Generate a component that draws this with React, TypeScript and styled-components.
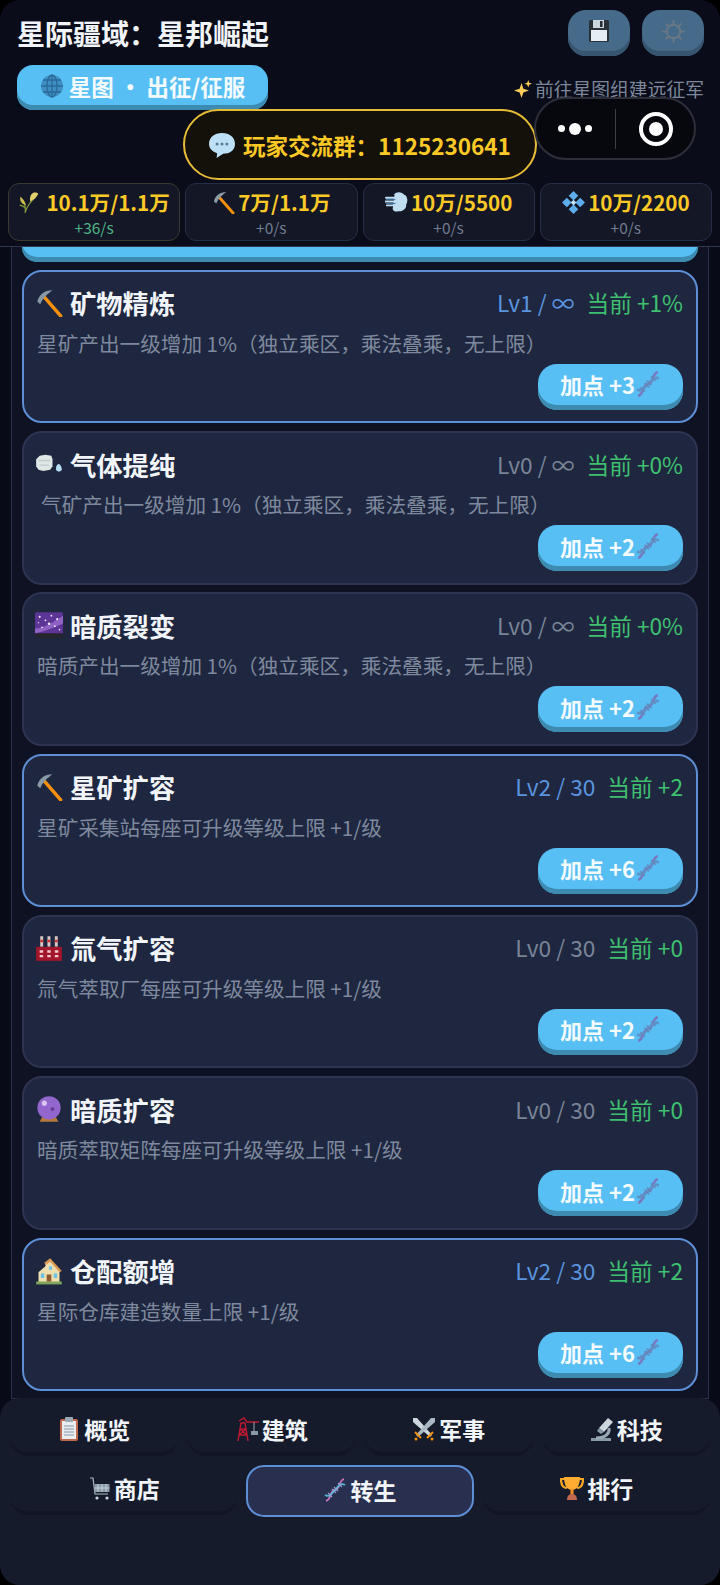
import React from 'react';
import styled, { createGlobalStyle } from 'styled-components';

const GlobalStyle = createGlobalStyle`
  html, body { margin: 0; padding: 0; background: #000; }
  * { box-sizing: border-box; }
  body { font-family: "Noto Sans CJK SC", "Noto Sans", sans-serif; }
`;

type IconName =
  | 'pick' | 'gas' | 'galaxy' | 'factory' | 'ball' | 'house' | 'dna' | 'dnaBright' | 'save' | 'gear' | 'globe'
  | 'spark' | 'chat' | 'wheat' | 'wind' | 'gem' | 'clip' | 'crane' | 'swords' | 'scope' | 'cart' | 'trophy';

const shapes: Record<IconName, React.ReactNode> = {
  pick: (
    <>
      <path d="M8 7 L22 23" stroke="#f4900c" strokeWidth="3" strokeLinecap="round" />
      <path d="M2 11 C3 5 8 1 15 1 C11 4 7 7 4.5 13 Z" fill="#8899a6" />
    </>
  ),
  gas: (
    <>
      <path d="M1 8 L4 5 L9 4 L14 5 L15 8 L15 14 L13 17 L7 18 L3 17 L1 14 Z" fill="#dfe6e6" />
      <path d="M3 9 H13 M4 13 H12" stroke="#c2cbcc" strokeWidth="1.2" />
      <path d="M20 12 C22 12 23 15 23 17 C22 19 19 19 18 17 C18 15 18 13 20 12 Z" fill="#b5dcf0" />
    </>
  ),
  galaxy: (
    <>
      <rect x="0" y="1" width="24" height="19" rx="1.5" fill="#5d3596" />
      <rect x="0" y="19" width="24" height="4" rx="1" fill="#26242c" />
      <path d="M0 15 C8 15 16 9 24 4 L24 11 C16 14 8 18 0 19 Z" fill="#8f62c4" />
      <g fill="#f1e6ff">
        <circle cx="4" cy="5" r=".9" /><circle cx="9" cy="8" r=".8" /><circle cx="14" cy="4" r=".8" />
        <circle cx="19" cy="7" r=".9" /><circle cx="12" cy="11" r="1.1" /><circle cx="6" cy="14" r=".8" />
        <circle cx="17" cy="13" r=".8" /><circle cx="21" cy="16" r=".7" /><circle cx="3" cy="10" r=".6" />
      </g>
    </>
  ),
  factory: (
    <>
      <path d="M4.5 2h2.5v9H4.5zM10.7 2h2.5v9h-2.5zM17 2h2.5v9H17z" fill="#d8c7c7" />
      <path d="M4.5 5h2.5v2H4.5zM10.7 5h2.5v2h-2.5zM17 5h2.5v2H17z" fill="#c33" />
      <rect x="1" y="11" width="22" height="12" fill="#a3152a" />
      <path d="M4 14h3v2H4zM10.5 14h3v2h-3zM17 14h3v2h-3zM4 18h3v2H4zM10.5 18h3v2h-3zM17 18h3v2h-3z" fill="#f1c9cf" />
    </>
  ),
  ball: (
    <>
      <path d="M6 19h12l2 4H4z" fill="#b6793c" />
      <circle cx="12" cy="11" r="10" fill="#9266cc" />
      <circle cx="8" cy="7" r="2.2" fill="#d9c5ef" /><circle cx="15" cy="12" r="1.6" fill="#5c3a8e" />
    </>
  ),
  house: (
    <>
      <path d="M3 23 V13 L9 8 V5 L13 2 L21 12 V23 Z" fill="#f0dfae" />
      <path d="M13 1 L8 5 L9 7 L13 4 L21 13 L23 12 Z" fill="#d99a55" />
      <rect x="1" y="21" width="22" height="2.5" fill="#7fa65a" />
      <rect x="10" y="15" width="4" height="6" fill="#8a5a2e" />
      <rect x="5" y="14" width="3" height="4" fill="#6cc3e8" /><rect x="16" y="14" width="3" height="4" fill="#6cc3e8" />
      <rect x="12" y="8" width="2.6" height="3" fill="#6cc3e8" />
    </>
  ),
  dna: (
    <g fill="none" opacity="0.85">
      <path d="M3 23 C9 21 6 13 12 12 C18 11 15 3 21 1" stroke="#7d6cb8" strokeWidth="2.4" />
      <path d="M2 17 C7 20 9 15 12 12 C15 9 17 4 22 7" stroke="#5f8cc0" strokeWidth="2.4" />
      <path d="M5 15l4 4M9 11l4 4M11 9l4 4M15 5l4 4" stroke="#6a7cb0" strokeWidth="1.6" />
    </g>
  ),
  dnaBright: (
    <g fill="none">
      <path d="M3 23 C9 21 6 13 12 12 C18 11 15 3 21 1" stroke="#d070c0" strokeWidth="1.8" />
      <path d="M2 17 C7 20 9 15 12 12 C15 9 17 4 22 7" stroke="#55b8d8" strokeWidth="1.8" />
      <path d="M5 15l4 4M9 11l4 4M11 9l4 4M15 5l4 4" stroke="#9a9fd0" strokeWidth="1.1" />
    </g>
  ),
  save: (
    <>
      <rect x="2" y="1" width="20" height="22" rx="1.5" fill="#2a3238" />
      <rect x="6" y="1" width="11" height="8" fill="#ccd6dd" />
      <rect x="13" y="2" width="2.6" height="6" fill="#2a3238" />
      <rect x="4" y="11" width="16" height="11" fill="#e6eef4" />
    </>
  ),
  gear: (
    <g fill="none" stroke="#677785" strokeWidth="2">
      <circle cx="12" cy="12" r="6.5" />
      <path d="M12 2v3.5M12 18.5V22M2 12h3.5M18.5 12H22M5 5l2.5 2.5M16.5 16.5L19 19M19 5l-2.5 2.5M7.500 16.500L5 19" strokeLinecap="round" />
    </g>
  ),
  globe: (
    <>
      <circle cx="12" cy="12" r="11" fill="#3f8fc4" />
      <g fill="none" stroke="#2a6a99" strokeWidth="1.3">
        <ellipse cx="12" cy="12" rx="5" ry="11" />
        <path d="M12 1v22M1 12h22M3 6h18M3 18h18" />
      </g>
    </>
  ),
  spark: (
    <g fill="#fdcb58">
      <path d="M10 4 L12.500 11.500 L20 14 L12.500 16.500 L10 24 L7.500 16.500 L0 14 L7.500 11.500 Z" />
      <path d="M19 0 L20.300 3.700 L24 5 L20.300 6.300 L19 10 L17.700 6.300 L14 5 L17.700 3.700 Z" />
    </g>
  ),
  chat: (
    <>
      <path d="M12 1 C19 1 24 5 24 11 C24 17 19 20 13 20 L7 24 L7.500 19.500 C3 18 0 15 0 11 C0 5 5 1 12 1 Z" fill="#bde0f6" />
      <circle cx="7.500" cy="11" r="1.4" fill="#5a7a99" /><circle cx="12" cy="11" r="1.4" fill="#5a7a99" /><circle cx="16.500" cy="11" r="1.4" fill="#5a7a99" />
    </>
  ),
  wheat: (
    <>
      <path d="M8 24 C9 18 8 12 4 8 M8 24 C10 17 14 11 20 6 M9 20 C8 17 6 16 2 15" stroke="#7f9a3a" strokeWidth="1.3" fill="none" />
      <path d="M17 1 C20 0 23 1 23 2 C22 6 18 8 14 11 C13 7 14 3 17 1 Z" fill="#e0cf6a" />
      <path d="M3 5 C4 7 8 9 9 15 C5 14 1 10 3 5 Z" fill="#cdbb50" />
    </>
  ),
  wind: (
    <>
      <path d="M9 4 C12 0 18 1 20 4 C24 5 24 12 22 14 C23 18 18 22 14 21 C11 22 9 21 8 19 L10 4 Z" fill="#c0ddf2" />
      <path d="M1 7h11M0 11h12M2 15h10" stroke="#c0ddf2" strokeWidth="2" strokeLinecap="round" />
      <path d="M1 9h10M1 13h10" stroke="#3f7fb5" strokeWidth="1" />
    </>
  ),
  gem: (
    <>
      <g fill="#5dadec">
        <path d="M12 0 L17 5 L12 10 L7 5 Z" />
        <path d="M5 7 L10 12 L5 17 L0 12 Z" />
        <path d="M19 7 L24 12 L19 17 L14 12 Z" />
        <path d="M12 14 L17 19 L12 24 L7 19 Z" />
      </g>
      <path d="M12 9 L15 12 L12 15 L9 12 Z" fill="#bde0f6" />
    </>
  ),
  clip: (
    <>
      <rect x="3" y="2" width="18" height="22" rx="2" fill="#c1694f" />
      <rect x="5" y="4" width="14" height="18" fill="#e8edf0" />
      <rect x="8" y="0" width="8" height="5" rx="1" fill="#99aab5" />
      <path d="M7 9h10M7 12h10M7 15h10M7 18h10" stroke="#8899a6" strokeWidth="1.2" />
    </>
  ),
  crane: (
    <>
      <path d="M3 24 L6 6 H10 L13 24 M4 18 H12 M5 12 H11 M5 12 L12 18 M11 12 L4 18" stroke="#be1931" strokeWidth="1.4" fill="none" />
      <path d="M4 4 L9 1 L12 5 H24" stroke="#be1931" strokeWidth="1.4" fill="none" />
      <path d="M19 5v9" stroke="#99aab5" strokeWidth="1" />
      <rect x="16" y="14" width="7" height="4" fill="#8899a6" />
    </>
  ),
  swords: (
    <>
      <path d="M1 1 L5 1 L20 18 L18 20 L1 5 Z" fill="#ccd6dd" />
      <path d="M23 1 L19 1 L4 18 L6 20 L23 5 Z" fill="#a9b8c2" />
      <path d="M3 15 L9 21 M21 15 L15 21" stroke="#f4900c" strokeWidth="2" />
      <circle cx="4" cy="22" r="1.5" fill="#f4900c" /><circle cx="20" cy="22" r="1.5" fill="#f4900c" />
    </>
  ),
  scope: (
    <>
      <rect x="1" y="21" width="20" height="3" fill="#8899a6" />
      <path d="M6 21 C16 21 20 16 19 11" stroke="#99aab5" strokeWidth="3" fill="none" />
      <path d="M18 1 L23 5 L14 15 L9 11 Z" fill="#ccd6dd" />
      <path d="M9 11 L14 15 L11 17 L7 14 Z" fill="#8899a6" />
    </>
  ),
  cart: (
    <>
      <path d="M3 2 H6 L8 18 H21" stroke="#aab8c2" strokeWidth="1.2" fill="none" />
      <rect x="7.500" y="8" width="15" height="8" fill="#8899a6" />
      <path d="M11 8v8M15 8v8M19 8v8M7.500 12h15" stroke="#ccd6dd" strokeWidth="0.9" />
      <circle cx="10" cy="22" r="1.6" fill="#ccd6dd" /><circle cx="20" cy="22" r="1.6" fill="#ccd6dd" />
    </>
  ),
  trophy: (
    <>
      <path d="M5 3 H1 C1 9 3 12 7 12 M19 3 H23 C23 9 21 12 17 12" stroke="#f9a825" strokeWidth="2.2" fill="none" />
      <path d="M4 1 H20 C20 9 17 14 12 14 C7 14 4 9 4 1 Z" fill="#ffac33" />
      <rect x="10.500" y="13" width="3" height="6" fill="#f19020" />
      <path d="M7 24 C7 20 9 18 12 18 C15 18 17 20 17 24 Z" fill="#c1694f" />
    </>
  ),
};

const Icon = ({ name, size = 24 }: { name: IconName; size?: number }) => (
  <svg viewBox="0 0 24 24" width={size} height={size} style={{ flex: 'none' }}>
    {shapes[name]}
  </svg>
);

interface Talent {
  icon: IconName;
  name: string;
  level: string;
  current: string;
  desc: string;
  cost: string;
  active?: boolean;
  indent?: boolean;
}

const talents: Talent[] = [
  { icon: 'pick', name: '矿物精炼', level: 'Lv1 / ∞', current: '当前 +1%', desc: '星矿产出一级增加 1%（独立乘区，乘法叠乘，无上限）', cost: '加点 +3', active: true },
  { icon: 'gas', name: '气体提纯', level: 'Lv0 / ∞', current: '当前 +0%', desc: '气矿产出一级增加 1%（独立乘区，乘法叠乘，无上限）', cost: '加点 +2', indent: true },
  { icon: 'galaxy', name: '暗质裂变', level: 'Lv0 / ∞', current: '当前 +0%', desc: '暗质产出一级增加 1%（独立乘区，乘法叠乘，无上限）', cost: '加点 +2' },
  { icon: 'pick', name: '星矿扩容', level: 'Lv2 / 30', current: '当前 +2', desc: '星矿采集站每座可升级等级上限 +1/级', cost: '加点 +6', active: true },
  { icon: 'factory', name: '氚气扩容', level: 'Lv0 / 30', current: '当前 +0', desc: '氚气萃取厂每座可升级等级上限 +1/级', cost: '加点 +2' },
  { icon: 'ball', name: '暗质扩容', level: 'Lv0 / 30', current: '当前 +0', desc: '暗质萃取矩阵每座可升级等级上限 +1/级', cost: '加点 +2' },
  { icon: 'house', name: '仓配额增', level: 'Lv2 / 30', current: '当前 +2', desc: '星际仓库建造数量上限 +1/级', cost: '加点 +6', active: true },
];

const resources: { icon: IconName; value: string; rate: string; hot?: boolean }[] = [
  { icon: 'wheat', value: '10.1万/1.1万', rate: '+36/s', hot: true },
  { icon: 'pick', value: '7万/1.1万', rate: '+0/s' },
  { icon: 'wind', value: '10万/5500', rate: '+0/s' },
  { icon: 'gem', value: '10万/2200', rate: '+0/s' },
];

const topTabs: { icon: IconName; label: string }[] = [
  { icon: 'clip', label: '概览' },
  { icon: 'crane', label: '建筑' },
  { icon: 'swords', label: '军事' },
  { icon: 'scope', label: '科技' },
];

const bottomTabs: { icon: IconName; label: string; active?: boolean }[] = [
  { icon: 'cart', label: '商店' },
  { icon: 'dnaBright', label: '转生', active: true },
  { icon: 'trophy', label: '排行' },
];

export default function App() {
  return (
    <Page>
      <GlobalStyle />
      <Header>
        <TitleRow>
          <Title>星际疆域：星邦崛起</Title>
          <ToolGroup>
            <ToolButton><Icon name="save" size={24} /></ToolButton>
            <ToolButton><Icon name="gear" size={25} /></ToolButton>
          </ToolGroup>
        </TitleRow>
        <MapRow>
          <MapButton><Icon name="globe" size={24} />星图 · 出征/征服</MapButton>
          <Hint><Icon name="spark" size={18} />前往星图组建远征军</Hint>
        </MapRow>
        <GroupChip><Icon name="chat" size={26} />玩家交流群：1125230641</GroupChip>
        <Capsule>
          <Dots><Dot /><Dot $big /><Dot /></Dots>
          <CapsuleLine />
          <Target><TargetCore /></Target>
        </Capsule>
        <ResourceRow>
          {resources.map((r) => (
            <ResourceCard key={r.value} $hot={r.hot}>
              <ResourceValue $hot={r.hot}><Icon name={r.icon} size={r.hot ? 21 : 23} />{r.value}</ResourceValue>
              <ResourceRate $hot={r.hot}>{r.rate}</ResourceRate>
            </ResourceCard>
          ))}
        </ResourceRow>
      </Header>
      <Main>
        <Panel>
          <ClippedBar />
          {talents.map((t) => (
            <Card key={t.name} $active={t.active}>
              <CardHead>
                <CardTitle><Icon name={t.icon} size={28} />{t.name}</CardTitle>
                <Stats>
                  <Level $active={t.active}>{t.level}</Level>
                  <Current>{t.current}</Current>
                </Stats>
              </CardHead>
              <Desc $indent={t.indent}>{t.desc}</Desc>
              <CardFoot>
                <AddButton>{t.cost}<Icon name="dna" size={26} /></AddButton>
              </CardFoot>
            </Card>
          ))}
        </Panel>
      </Main>
      <Nav>
        <NavRow $cols={4}>
          {topTabs.map((t) => (
            <Tab key={t.label}><Icon name={t.icon} size={24} />{t.label}</Tab>
          ))}
        </NavRow>
        <NavRow $cols={3}>
          {bottomTabs.map((t) => (
            <Tab key={t.label} $active={t.active}><Icon name={t.icon} size={24} />{t.label}</Tab>
          ))}
        </NavRow>
      </Nav>
    </Page>
  );
}

const Page = styled.div`
  position: relative;
  width: 720px;
  height: 1585px;
  display: flex;
  flex-direction: column;
  overflow: hidden;
  border-radius: 20px;
  background: #080b17;
`;

const Header = styled.header`
  position: relative;
  height: 247px;
  flex: none;
  padding: 10px 8px 0;
  background: #0a0d19;
  border-bottom: 1px solid #2f374e;
`;

const TitleRow = styled.div`
  display: flex;
  align-items: center;
  justify-content: space-between;
  height: 46px;
  padding: 0 9px;
`;

const Title = styled.h1`
  margin: 0;
  font-size: 28px;
  font-weight: 700;
  line-height: 46px;
  color: #f1f5f9;
`;

const ToolGroup = styled.div`
  display: flex;
  gap: 12px;
  margin-right: -1px;
`;

const ToolButton = styled.div`
  width: 62px;
  height: 46px;
  display: flex;
  align-items: center;
  justify-content: center;
  border-radius: 18px;
  background: #466a8a;
  box-shadow: inset 0 -5px 0 #385570;
  padding-bottom: 4px;
`;

const MapRow = styled.div`
  display: flex;
  align-items: flex-start;
  justify-content: space-between;
  margin-top: 9px;
  padding: 0 8px 0 9px;
`;

const MapButton = styled.div`
  width: 251px;
  height: 45px;
  display: flex;
  align-items: center;
  justify-content: center;
  gap: 5px;
  border-radius: 16px;
  padding-bottom: 4px;
  background: #58bff4;
  box-shadow: inset 0 -5px 0 #3d8bb0;
  color: #f4fbff;
  font-size: 22.5px;
  font-weight: 700;
  white-space: pre;
`;

const Hint = styled.div`
  display: flex;
  align-items: center;
  gap: 3px;
  margin-top: 11px;
  color: #7c879b;
  font-size: 18.8px;
  line-height: 26px;
`;

const GroupChip = styled.div`
  position: absolute;
  left: 183px;
  top: 109px;
  width: 354px;
  height: 71px;
  display: flex;
  align-items: center;
  justify-content: center;
  gap: 8px;
  border: 2px solid #e6bb35;
  border-radius: 36px;
  background: #14110b;
  color: #fbc926;
  font-size: 22.5px;
  font-weight: 700;
`;

const Capsule = styled.div`
  position: absolute;
  left: 534px;
  top: 97px;
  width: 162px;
  height: 63px;
  display: flex;
  align-items: center;
  border: 2px solid #2c2f3a;
  border-radius: 32px;
  background: #07080d;
`;

const Dots = styled.div`
  width: 79px;
  display: flex;
  align-items: center;
  justify-content: center;
  gap: 4px;
  padding-right: 2px;
`;

const Dot = styled.span<{ $big?: boolean }>`
  width: ${(p) => (p.$big ? 12 : 7)}px;
  height: ${(p) => (p.$big ? 12 : 7)}px;
  border-radius: 50%;
  background: #fff;
`;

const CapsuleLine = styled.span`
  width: 1px;
  height: 40px;
  background: #3b3e49;
`;

const Target = styled.span`
  width: 34px;
  height: 34px;
  margin-left: 23px;
  display: flex;
  align-items: center;
  justify-content: center;
  border: 4px solid #fff;
  border-radius: 50%;
`;

const TargetCore = styled.span`
  width: 14px;
  height: 14px;
  border-radius: 50%;
  background: #fff;
`;

const ResourceRow = styled.div`
  position: absolute;
  left: 8px;
  right: 8px;
  top: 183px;
  display: grid;
  grid-template-columns: repeat(4, 1fr);
  gap: 5px;
`;

const ResourceCard = styled.div<{ $hot?: boolean }>`
  height: 58px;
  display: flex;
  flex-direction: column;
  align-items: center;
  border: 1.5px solid ${(p) => (p.$hot ? '#3a3a32' : '#262e45')};
  border-radius: 11px;
  background: #131726;
`;

const ResourceValue = styled.div<{ $hot?: boolean }>`
  display: flex;
  align-items: center;
  gap: ${(p) => (p.$hot ? 7 : 3)}px;
  margin-top: 4px;
  color: #fbc926;
  font-size: 20.6px;
  font-weight: 700;
  line-height: 29px;
  white-space: nowrap;
`;

const ResourceRate = styled.div<{ $hot?: boolean }>`
  color: ${(p) => (p.$hot ? '#4fb585' : '#717c91')};
  font-size: 15.5px;
  line-height: 20px;
`;

const Main = styled.main`
  flex: 1;
  min-height: 0;
  padding: 0 11px;
  overflow: hidden;
`;

const Panel = styled.div`
  height: 100%;
  padding: 0 10px;
  display: flex;
  flex-direction: column;
  gap: 7.8px;
  border: 1.5px solid #2a3148;
  border-top: 0;
  background: #0e1222;
`;

const ClippedBar = styled.div`
  height: 15px;
  flex: none;
  border-radius: 0 0 18px 18px;
  background: #58bff4;
  box-shadow: inset 0 -5px 0 #3d8bb0;
`;

const Card = styled.article<{ $active?: boolean }>`
  height: 153.5px;
  flex: none;
  padding: 11px 13px 0 13px;
  border: 2px solid ${(p) => (p.$active ? '#5d8fd6' : '#2d3350')};
  border-radius: 20px;
  background: #1e2640;
`;

const CardHead = styled.div`
  display: flex;
  align-items: center;
  justify-content: space-between;
  height: 40px;
`;

const CardTitle = styled.h2`
  margin: 0 0 0 -2px;
  display: flex;
  align-items: center;
  gap: 7px;
  color: #f1f5f9;
  font-size: 26.3px;
  font-weight: 700;
`;

const Stats = styled.div`
  display: flex;
  align-items: center;
  gap: 12px;
  font-size: 22.7px;
`;

const Level = styled.span<{ $active?: boolean }>`
  color: ${(p) => (p.$active ? '#5a94de' : '#7a8497')};
`;

const Current = styled.span`
  color: #3ec06f;
`;

const Desc = styled.p<{ $indent?: boolean }>`
  margin: 5px 0 0;
  padding-left: ${(p) => (p.$indent ? 4 : 0)}px;
  color: #7f899d;
  font-size: 20.63px;
  line-height: 30px;
  white-space: nowrap;
`;

const CardFoot = styled.div`
  display: flex;
  justify-content: flex-end;
  margin-top: 6px;
`;

const AddButton = styled.div`
  width: 145px;
  height: 46px;
  display: flex;
  align-items: center;
  justify-content: center;
  padding-bottom: 5px;
  border-radius: 19px;
  background: #58bff4;
  box-shadow: inset 0 -5px 0 #3d8bb0;
  color: #f4fbff;
  font-size: 22px;
  font-weight: 700;
`;

const Nav = styled.nav`
  position: relative;
  margin-top: -1px;
  flex: none;
  height: 187px;
  padding: 8px 10px 0;
  display: flex;
  flex-direction: column;
  gap: 9px;
  border-radius: 20px 20px 0 0;
  background: #161b2b;
`;

const NavRow = styled.div<{ $cols: number }>`
  display: grid;
  grid-template-columns: repeat(${(p) => p.$cols}, 1fr);
  gap: 10px;
`;

const Tab = styled.div<{ $active?: boolean }>`
  height: ${(p) => (p.$active ? 52 : 50)}px;
  margin: 0 ${(p) => (p.$active ? -1 : 0)}px;
  display: flex;
  align-items: center;
  justify-content: center;
  gap: 3px;
  padding-bottom: ${(p) => (p.$active ? 3 : 0)}px;
  border-radius: 18px;
  border: ${(p) => (p.$active ? '2px solid #5d8fd6' : '0')};
  border-bottom: ${(p) => (p.$active ? '2px solid #5d8fd6' : '4px solid #121624')};
  background: ${(p) => (p.$active ? '#29304f' : '#161b2b')};
  color: #f1f5f9;
  font-size: 23px;
  font-weight: 700;
`;
